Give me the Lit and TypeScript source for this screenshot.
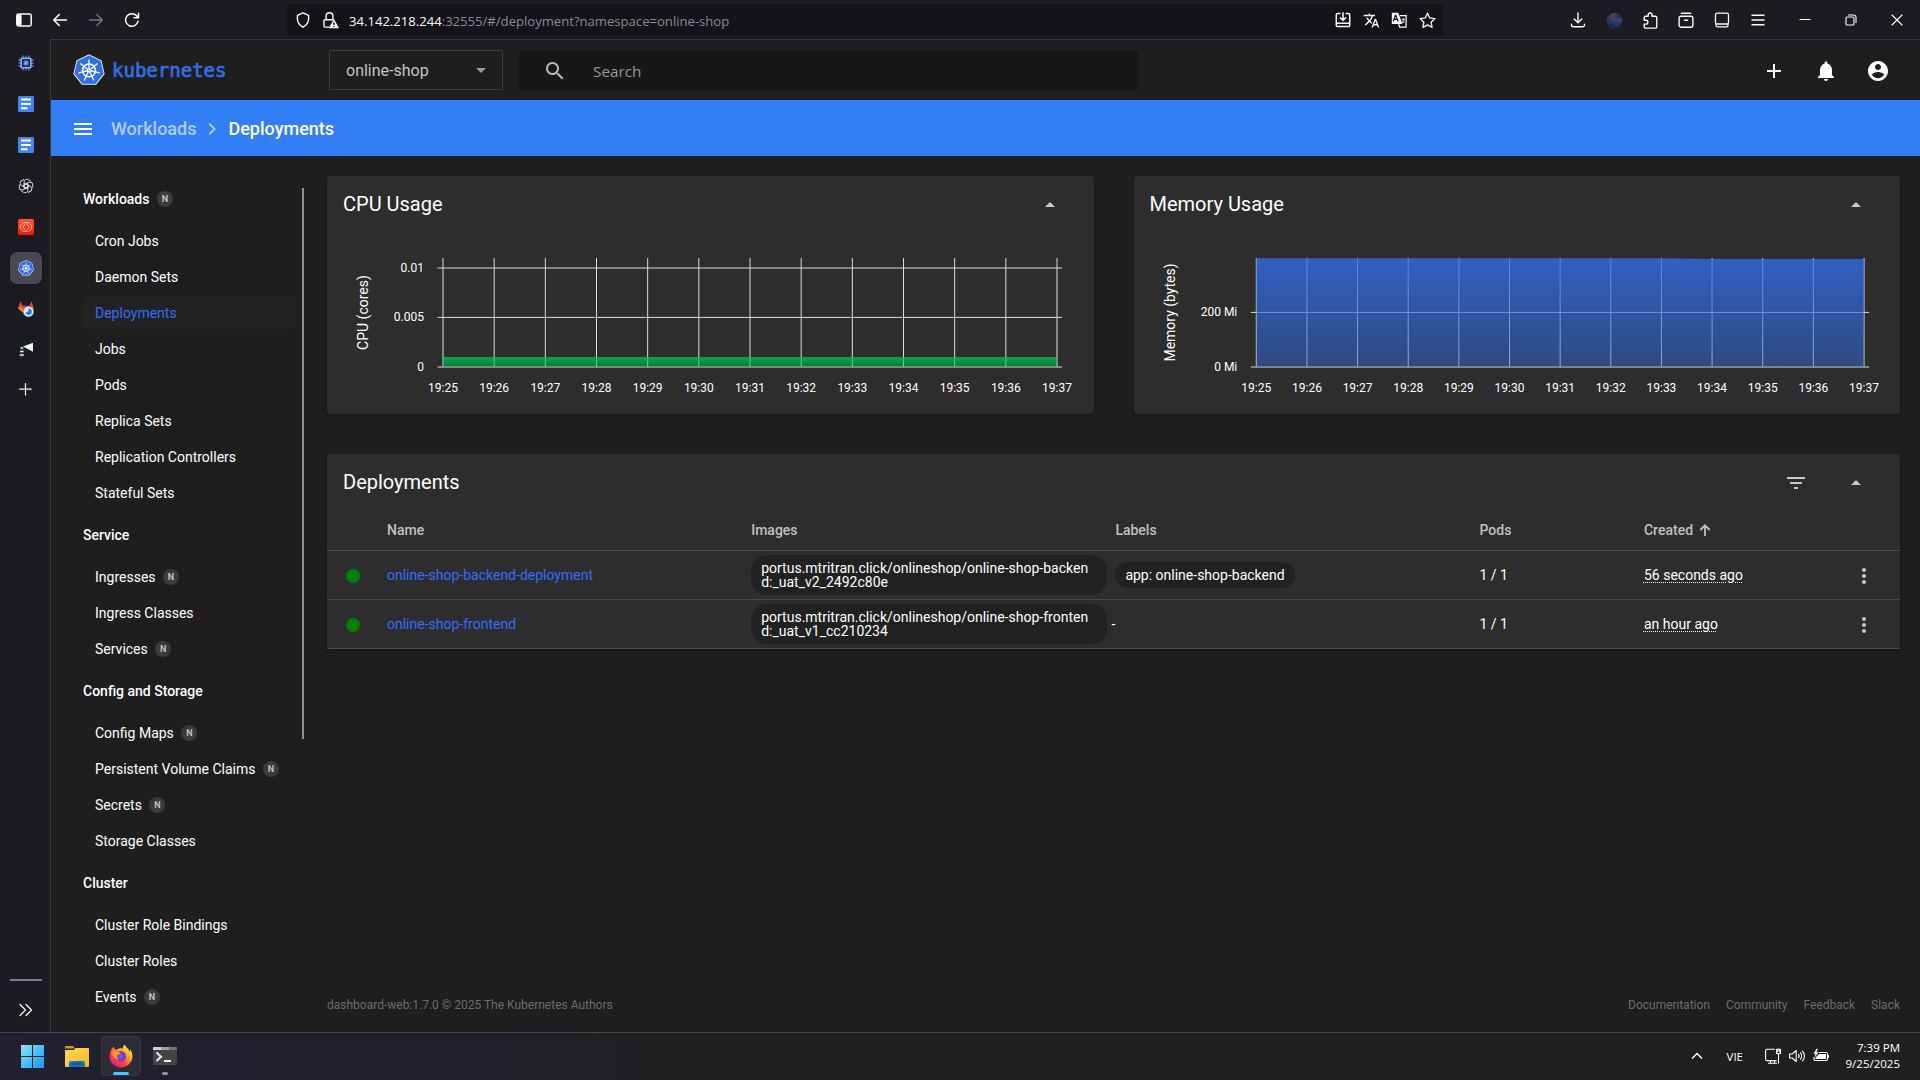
import { LitElement, html, css, svg, TemplateResult } from "lit";
import { customElement, property } from "lit/decorators.js";

const M = {
  search:
    "M15.5 14h-.79l-.28-.27C15.41 12.59 16 11.11 16 9.5 16 5.91 13.09 3 9.5 3S3 5.91 3 9.5 5.91 16 9.5 16c1.61 0 3.09-.59 4.23-1.57l.27.28v.79l5 4.99L20.49 19l-4.99-5zm-6 0C7.01 14 5 11.99 5 9.5S7.01 5 9.5 5 14 7.01 14 9.5 11.99 14 9.5 14z",
  add: "M19 13h-6v6h-2v-6H5v-2h6V5h2v6h6v2z",
  bell: "M12 22c1.1 0 2-.9 2-2h-4c0 1.1.89 2 2 2zm6-6v-5c0-3.07-1.64-5.64-4.5-6.32V4c0-.83-.67-1.5-1.5-1.5s-1.5.67-1.5 1.5v.68C7.63 5.36 6 7.92 6 11v5l-2 2v1h16v-1l-2-2z",
  account:
    "M12 2C6.48 2 2 6.48 2 12s4.48 10 10 10 10-4.48 10-10S17.52 2 12 2zm0 3c1.66 0 3 1.34 3 3s-1.34 3-3 3-3-1.34-3-3 1.34-3 3-3zm0 14.2c-2.5 0-4.71-1.28-6-3.22.03-1.99 4-3.08 6-3.08 1.99 0 5.97 1.09 6 3.08-1.29 1.94-3.5 3.22-6 3.22z",
  menu: "M3 18h18v-2H3v2zm0-5h18v-2H3v2zm0-7v2h18V6H3z",
  chevron: "M10 6L8.59 7.41 13.17 12l-4.58 4.59L10 18l6-6z",
  filter: "M10 18h4v-2h-4v2zM3 6v2h18V6H3zm3 7h12v-2H6v2z",
  more: "M12 8c1.1 0 2-.9 2-2s-.9-2-2-2-2 .9-2 2 .9 2 2 2zm0 2c-1.1 0-2 .9-2 2s.9 2 2 2 2-.9 2-2-.9-2-2-2zm0 6c-1.1 0-2 .9-2 2s.9 2 2 2 2-.9 2-2-.9-2-2-2z",
  up: "M7 14l5-5 5 5z",
  down: "M7 10l5 5 5-5z",
  translate:
    "M12.87 15.07l-2.54-2.51.03-.03c1.74-1.94 2.98-4.17 3.71-6.53H17V4h-7V2H8v2H1v1.99h11.17C11.5 7.92 10.44 9.75 9 11.35 8.07 10.32 7.3 9.19 6.69 8h-2c.73 1.63 1.73 3.17 2.98 4.56l-5.09 5.02L4 19l5-5 3.11 3.11.76-2.04zM18.5 10h-2L12 22h2l1.12-3h4.75L21 22h2l-4.5-12zm-2.62 7l1.62-4.33L19.12 17h-3.24z",
};

const mat = (d: string, size = 24) =>
  html`<svg width=${size} height=${size} viewBox="0 0 24 24" fill="currentColor"><path d=${d} /></svg>`;

const line = (body: TemplateResult | unknown, size = 16, w = 1.3) =>
  html`<svg width=${size} height=${size} viewBox="0 0 16 16" fill="none" stroke="currentColor" stroke-width=${w} stroke-linecap="round" stroke-linejoin="round">${body}</svg>`;

const pt = (cx: number, cy: number, r: number, deg: number) => {
  const a = ((deg - 90) * Math.PI) / 180;
  return [cx + r * Math.cos(a), cy + r * Math.sin(a)] as const;
};

/** Blue heptagon with the seven-spoked helm. */
const helm = (size: number, rim: number) => {
  const seven = [0, 1, 2, 3, 4, 5, 6].map((i) => (i * 360) / 7);
  const hept = seven.map((a) => pt(16, 16.4, 14.8, a).map((v) => v.toFixed(2)).join(",")).join(" ");
  return html`<svg width=${size} height=${size} viewBox="0 0 32 32">
    <polygon points=${hept} fill="#326ce5" stroke="#fff" stroke-width=${rim + 2.2} stroke-linejoin="round" />
    <polygon points=${hept} fill="#326ce5" stroke="#326ce5" stroke-width="0.6" stroke-linejoin="round" />
    <circle cx="16" cy="16.4" r="6.4" fill="none" stroke="#fff" stroke-width="1.5" />
    ${seven.map((a) => {
      const [x1, y1] = pt(16, 16.4, 1.6, a);
      const [x2, y2] = pt(16, 16.4, 10.6, a);
      return svg`<line x1=${x1} y1=${y1} x2=${x2} y2=${y2} stroke="#fff" stroke-width="1.3" stroke-linecap="round" />`;
    })}
    <circle cx="16" cy="16.4" r="2" fill="#fff" />
    <circle cx="16" cy="16.4" r="0.7" fill="#326ce5" />
  </svg>`;
};

const ic = {
  panel: html`<svg width="16" height="16" viewBox="0 0 16 16"><rect x=".8" y="2.1" width="14.4" height="11.8" rx="1.6" fill="none" stroke="#fbfbfe" stroke-width="1.5" /><rect x="1" y="2.4" width="4.6" height="11.2" fill="#fbfbfe" /></svg>`,
  back: line(svg`<path d="M14.5 8H1.8M7.2 2.6 1.7 8l5.5 5.4" />`, 16, 1.5),
  fwd: line(svg`<path d="M1.5 8h12.7M8.8 2.6 14.3 8l-5.5 5.4" />`, 16, 1.4),
  reload: line(svg`<path d="M14 9.3A6.3 6.3 0 1 1 12.4 3.6L14 5.2M14.5 1.2v4.6H9.9" />`, 16, 1.5),
  shield: line(svg`<path d="M8 .9 13.6 3.3v3.5c0 4-2.3 6.6-5.6 8.4-3.3-1.8-5.6-4.4-5.6-8.4V3.3z" />`, 16, 1.4),
  lock: html`<svg width="17" height="17" viewBox="0 0 17 17" fill="none" stroke="#fbfbfe" stroke-width="1.4"><path d="M4.1 8V4.2a3.4 3.4 0 0 1 6.8 0V8M7 15.1H3.2A1.2 1.2 0 0 1 2 13.900V8.900A1.200 1.200 0 0 1 3.200 7.700h8.600" /><path d="M11.900 7.900 16.300 15.800H7.500z" fill="#fbfbfe" stroke-width="1" stroke-linejoin="round" /><path d="M11.900 10.400v2.600M11.900 13.900v1" stroke="#141319" /></svg>`,
  save: line(svg`<path d="M5 1.400H2.600A1.300 1.300 0 0 0 1.300 2.700V13.300a1.300 1.300 0 0 0 1.300 1.300H13.400a1.300 1.300 0 0 0 1.300-1.300V2.700A1.300 1.300 0 0 0 13.400 1.400H11M8 .8V8M5.300 5.800 8 8.400l2.700-2.600M1.500 11.300h13" />`, 16, 1.5),
  gtrans: html`<svg width="16" height="16" viewBox="0 0 16 16"><path d="M.8.7h6.500l4 11.300H.8z" fill="#fbfbfe" /><path d="M2.300 9.300 4.500 3.300h.4L7 9.300M3 7.300h3.300" fill="none" stroke="#141319" stroke-width="1.200" /><path d="M8.800 3.700h6.300v11.500H8.700L7.600 12" fill="none" stroke="#fbfbfe" stroke-width="1.200" /><path d="M10.700 7.300h3.200M12.300 6.500v.8M13.300 7.500c-.5 1.800-1.500 2.800-2.400 3.500M11.300 8.500l2 2.500" fill="none" stroke="#fbfbfe" stroke-width=".9" /></svg>`,
  star: line(svg`<path d="m8 1.100 2.100 4.500 4.900.6-3.600 3.400.9 4.900L8 12.100l-4.300 2.400.9-4.900L1 6.200l4.900-.6z" />`, 17, 1.2),
  download: line(svg`<path d="M8 1v9.600M4.200 7.100 8 10.800l3.800-3.700M1.500 12.200v.8a1.800 1.800 0 0 0 1.800 1.800h9.400a1.800 1.800 0 0 0 1.800-1.800v-.8" />`, 16, 1.4),
  globe: html`<svg width="17" height="17" viewBox="0 0 17 17"><circle cx="8.500" cy="8.500" r="7.800" fill="#243667" /><path d="M2 5.500C4 2 8 .8 10 1.500L8.500 5 12 7l3.500-1 .5 4-3 1-2.500-2-3.500 1-2-3z" fill="#46405a" /><path d="M3 12c3 1 6 4 9 2.500" stroke="#162858" stroke-width="2" fill="none" /></svg>`,
  puzzle: line(svg`<path d="M5.800 4V2.800a1.800 1.800 0 0 1 3.600 0V4h3.300a1.200 1.200 0 0 1 1.200 1.200V14a1.200 1.200 0 0 1-1.200 1.200H3.300A1.200 1.200 0 0 1 2.100 14v-2.600h1.600a1.800 1.800 0 0 0 0-3.600H2.100V5.200A1.200 1.200 0 0 1 3.300 4z" />`, 17, 1.3),
  archive: line(svg`<rect x="1.100" y="4.200" width="13.800" height="11" rx="2" /><path d="M3.300 1.200h9.400M6.500 8.300h3" />`, 16, 1.4),
  device: line(svg`<rect x="1.500" y="1.200" width="13" height="10.800" rx="1.600" /><path d="M2 12.500v.8a1.600 1.600 0 0 0 1.600 1.600h8.800a1.600 1.600 0 0 0 1.600-1.600v-.8" />`, 16, 1.3),
  burger: line(svg`<path d="M2 3.300h12M2 8h12M2 12.700h12" />`, 16, 1.4),
  min: line(svg`<path d="M3 7.500h10" />`, 16, 1.1),
  restore: line(svg`<rect x="3" y="5" width="8" height="8" rx="1.300" /><path d="M5.500 3h5A2.500 2.500 0 0 1 13 5.500v5" />`, 16, 1.1),
  close: line(svg`<path d="M3 3l10 10M13 3 3 13" />`, 16, 1.1),
};

const doc = html`<svg width="16" height="16" viewBox="0 0 16 16"><rect width="16" height="16" rx="1.300" fill="#4285f4" /><path d="M3 3.500h10M3 8h10M3 12.300h6.500" stroke="#fff" stroke-width="1.900" /></svg>`;

const tabs: { icon: TemplateResult; active?: boolean }[] = [
  {
    icon: html`<svg width="16" height="16" viewBox="0 0 16 16" fill="none"><path d="M5 .5v15M8 .5v15M11 .5v15M.5 5h15M.5 8h15M.5 11h15" stroke="#5d86dd" stroke-width="1.300" /><rect x="3.200" y="3.200" width="9.600" height="9.600" rx=".8" fill="#1c2440" stroke="#8fb4fa" stroke-width="1.500" /><rect x="6" y="6" width="4" height="4" fill="#7ea8f8" stroke="#4877dd" /></svg>`,
  },
  { icon: doc },
  { icon: doc },
  {
    icon: html`<svg width="16" height="16" viewBox="-8 -8 16 16" fill="none" stroke="#d4d4d8" stroke-width="1">${[0, 60, 120, 180, 240, 300].map(
      (a) => svg`<path transform="rotate(${a})" d="M-1.800-1.300V-4.700A2.700 2.700 0 0 1 2.300-6.400L4.600-5M-1.800-2.800 1.900-.9V2.700" />`,
    )}</svg>`,
  },
  {
    icon: html`<svg width="16" height="16" viewBox="0 0 16 16"><defs><linearGradient id="rg" x1="0" y1="0" x2="0" y2="1"><stop offset="0" stop-color="#ff5a2c" /><stop offset="1" stop-color="#f81406" /></linearGradient></defs><rect width="16" height="16" rx="2" fill="url(#rg)" /><path d="M8.500 4.200 7 3.400C4.600 3.400 2.200 6 2.200 8s2.400 4.600 4.800 4.600l1.500-.8M7.500 4.200 9 3.400c2.400 0 4.800 2.600 4.800 4.600S11.400 12.600 9 12.600l-1.500-.8" fill="none" stroke="#ffc9bd" stroke-width=".9" stroke-linejoin="round" /><path d="M7 5.200 4.800 8 7 10.800M9 5.200 11.200 8 9 10.800" fill="none" stroke="#ffc9bd" stroke-width=".9" stroke-linejoin="round" /></svg>`,
  },
  { icon: helm(16, 0), active: true },
  {
    icon: html`<svg width="16" height="16" viewBox="0 0 16 16"><path d="M2.600.3 0 7.300l8 6.700 8-6.700L13.400.3l-2 4.400H4.600z" fill="#e8472b" /><path d="M0 7.300 2.300 5.500 9 11v4.500z" fill="#fc7a30" /><circle cx="10.500" cy="10.600" r="5.300" fill="#d9e7f5" stroke="#2f71b8" stroke-width=".5" /><path d="M10.600 7.500a3.200 3.200 0 1 1-3.100 4c2.300.3 3.300-1.500 3.100-4z" fill="#2d78c6" /></svg>`,
  },
  {
    icon: html`<svg width="16" height="16" viewBox="0 0 16 16"><path d="M5 4.500 15 .8v9z" fill="#eef3f6" /><path d="M2 4.500h3.500v11H2z" fill="#17374a" /><path d="M2.500 5.300h2.800v1.500H2.500zM2 8.700h3.700v1.600H2zM1.700 12.300h4.200v1.500H1.700z" fill="#dce5ea" /></svg>`,
  },
  {
    icon: html`<svg width="16" height="16" viewBox="0 0 16 16"><path d="M7.500 .5v11.500M1.700 6.200h11.600" stroke="#fbfbfe" stroke-width="1.200" stroke-linecap="round" /></svg>`,
  },
];

interface Entry { name: string; n?: boolean; active?: boolean }
const nav: { title: string; n?: boolean; items: Entry[] }[] = [
  {
    title: "Workloads",
    n: true,
    items: [
      { name: "Cron Jobs" },
      { name: "Daemon Sets" },
      { name: "Deployments", active: true },
      { name: "Jobs" },
      { name: "Pods" },
      { name: "Replica Sets" },
      { name: "Replication Controllers" },
      { name: "Stateful Sets" },
    ],
  },
  { title: "Service", items: [{ name: "Ingresses", n: true }, { name: "Ingress Classes" }, { name: "Services", n: true }] },
  {
    title: "Config and Storage",
    items: [
      { name: "Config Maps", n: true },
      { name: "Persistent Volume Claims", n: true },
      { name: "Secrets", n: true },
      { name: "Storage Classes" },
    ],
  },
  { title: "Cluster", items: [{ name: "Cluster Role Bindings" }, { name: "Cluster Roles" }, { name: "Events", n: true }] },
];

const rows = [
  {
    name: "online-shop-backend-deployment",
    image: ["portus.mtritran.click/onlineshop/online-shop-backen", "d:_uat_v2_2492c80e"],
    label: "app: online-shop-backend",
    pods: "1 / 1",
    created: "56 seconds ago",
  },
  {
    name: "online-shop-frontend",
    image: ["portus.mtritran.click/onlineshop/online-shop-fronten", "d:_uat_v1_cc210234"],
    label: "",
    pods: "1 / 1",
    created: "an hour ago",
  },
];

@customElement("usage-chart")
class UsageChart extends LitElement {
  @property() heading = "";
  @property() axis = "";
  @property({ type: Number }) x0 = 0;
  @property({ type: Number }) x1 = 0;
  @property({ type: Number }) axisX = 0;
  @property({ type: Number }) fillTop = 0;
  @property({ type: Number }) dip = 0;
  @property() color = "";
  @property({ attribute: false }) ticks: [string, number][] = [];

  static styles = css`
    :host {
      display: flex;
      flex-direction: column;
      flex: 1;
      min-width: 0;
      height: 238px;
      background: #2d2d2d;
      border-radius: 4px;
      box-shadow: 0 1px 3px rgba(0, 0, 0, 0.35);
      color: #fff;
    }
    .head {
      display: flex;
      justify-content: space-between;
      align-items: center;
      height: 56px;
      padding: 0 32px 0 16px;
      font-size: 20px;
    }
    .head svg {
      color: #c8c8c8;
      margin-top: 2px;
    }
    .plot {
      display: block;
      width: 100%;
      height: 182px;
    }
    text {
      fill: #fff;
      font-size: 12px;
    }
    .axis {
      font-size: 14px;
    }
  `;

  render() {
    const bottom = 134.7;
    const top = 26;
    const step = (this.x1 - this.x0) / 12;
    const area = [
      [this.x0, this.fillTop],
      [this.x0 + 8 * step, this.fillTop],
      [this.x0 + 9 * step, this.fillTop + this.dip],
      [this.x1, this.fillTop + this.dip],
      [this.x1, bottom],
      [this.x0, bottom],
    ]
      .map((p) => p.join(","))
      .join(" ");
    return html`
      <div class="head"><span>${this.heading}</span>${mat(M.up)}</div>
      <svg class="plot">
        <defs>
          <linearGradient id="g" x1="0" y1="0" x2="0" y2="1">
            <stop offset="0" stop-color=${this.color} stop-opacity=".8" />
            <stop offset="1" stop-color=${this.color} stop-opacity=".45" />
          </linearGradient>
        </defs>
        <g stroke="#ddd" stroke-width="1">
          ${this.ticks.map(([, y]) => svg`<line x1=${this.x0 - 5.5} x2=${this.x1 + 5.1} y1=${y} y2=${y} />`)}
          ${Array.from({ length: 13 }, (_, i) => {
            const x = this.x0 + i * step;
            return svg`<line x1=${x} x2=${x} y1=${top} y2=${bottom} />`;
          })}
        </g>
        <polygon points=${area} fill="url(#g)" />
        ${this.ticks.map(([t, y]) => svg`<text x=${this.x0 - 19} y=${y + 4} text-anchor="end">${t}</text>`)}
        ${Array.from(
          { length: 13 },
          (_, i) => svg`<text x=${this.x0 + i * step} y="160" text-anchor="middle">19:${25 + i}</text>`,
        )}
        <text class="axis" text-anchor="middle" transform="translate(${this.axisX} 80.500) rotate(-90)">${this.axis}</text>
      </svg>
    `;
  }
}

@customElement("app-root")
class AppRoot extends LitElement {
  static styles = css`
    :host {
      display: block;
      width: 1920px;
      height: 1080px;
      overflow: hidden;
      background: #1e1e1e;
      color: #fff;
      font-family: Roboto, "Liberation Sans", sans-serif;
      font-size: 14px;
    }
    * {
      box-sizing: border-box;
    }
    svg {
      display: block;
      flex: none;
    }
    .screen {
      display: flex;
      flex-direction: column;
      height: 1080px;
    }
    .titlebar {
      display: flex;
      height: 39px;
      background: #1c1b22;
      color: #fbfbfe;
      padding-left: 6px;
      align-items: center;
      flex: none;
    }
    .cell {
      width: 36px;
      height: 39px;
      display: flex;
      align-items: center;
      justify-content: center;
      padding-top: 1px;
    }
    .dim {
      color: #77767d;
    }
    .url {
      display: flex;
      align-items: center;
      width: 1156px;
      height: 32px;
      margin: 1px 117px 0 137px;
      padding: 0 2px 0 8px;
      background: #141319;
      border-radius: 4px;
      font-family: "Open Sans", "Noto Sans", sans-serif;
      font-size: 13.100px;
    }
    .lock {
      margin-left: 11px;
    }
    .addr {
      flex: 1;
      margin-left: 10px;
      color: #8b8a91;
      padding-top: 2px;
    }
    .addr b {
      font-weight: 400;
      color: #fbfbfe;
    }
    .url .cell {
      width: 28px;
      height: 32px;
      padding: 0;
    }
    .win {
      display: flex;
      margin-left: 6px;
    }
    .win .cell {
      width: 46px;
    }
    .body {
      display: flex;
      flex: 1;
      min-height: 0;
      background: #1c1b22;
    }
    .tabs {
      display: flex;
      flex-direction: column;
      align-items: center;
      width: 50px;
      padding: 8px 0 12px 2px;
      flex: none;
    }
    .tab {
      display: flex;
      align-items: center;
      justify-content: center;
      width: 32px;
      height: 32px;
      margin-bottom: 9px;
      border-radius: 7px;
    }
    .tab.active {
      background: #4a4953;
      box-shadow: 0 0 3px rgba(0, 0, 0, 0.5);
    }
    .rule {
      width: 32px;
      height: 2px;
      background: #7e7d86;
      margin-top: auto;
      margin-bottom: 21px;
    }
    .tabs > svg {
      color: #fbfbfe;
      margin-bottom: 2px;
    }
    .page {
      display: flex;
      flex-direction: column;
      flex: 1;
      background: #1e1e1e;
      border-left: 1px solid #38373d;
      border-top: 1px solid #38373d;
    }
    .header {
      display: flex;
      align-items: center;
      height: 60px;
      padding: 0 30px 0 22px;
      flex: none;
    }
    .brand {
      display: flex;
      align-items: center;
      gap: 7px;
      width: 256px;
      color: #326de6;
    }
    .brand text {
      font-family: "DejaVu Sans Mono", monospace;
      font-size: 19px;
      fill: #326de6;
      stroke: #326de6;
      stroke-width: 0.700px;
    }
    .select {
      display: flex;
      align-items: center;
      justify-content: space-between;
      width: 174px;
      height: 40px;
      border: 1px solid #3c3c3c;
      border-radius: 2px;
      padding: 0 9px 0 16px;
      font-size: 16px;
      color: #c4c4c4;
    }
    .select svg {
      color: #9a9a9a;
    }
    .search {
      display: flex;
      align-items: center;
      gap: 26px;
      width: 619px;
      height: 39px;
      margin-left: 16px;
      padding-left: 24px;
      background: #171717;
      border-radius: 3px;
      color: #b9b9b9;
      font-family: "Open Sans", sans-serif;
      font-size: 15.300px;
      margin-top: 1px;
    }
    .search span {
      color: #999;
    }
    .acts {
      display: flex;
      gap: 28px;
      margin-left: auto;
      padding-top: 2px;
    }
    .toolbar {
      display: flex;
      align-items: center;
      height: 56px;
      background: #327ef5;
      padding: 1px 0 0 20px;
      font-size: 18px;
      font-weight: 500;
      flex: none;
    }
    .crumb {
      margin-left: 16px;
    }
    .faded {
      opacity: 0.6;
    }
    .sep {
      padding: 0 4px;
    }
    .content {
      display: flex;
      flex: 1;
      min-height: 0;
    }
    .nav {
      display: flex;
      flex-direction: column;
      width: 251px;
      padding: 19px 7px 0 32px;
      flex: none;
    }
    .group,
    .item {
      display: flex;
      align-items: center;
      gap: 7.500px;
      flex: none;
    }
    .group {
      height: 48px;
      font-weight: 500;
    }
    .item {
      height: 32px;
      margin: 2px 0;
      padding-left: 12px;
      border-radius: 2px;
    }
    .item.active {
      background: #222;
      color: #326ffb;
    }
    .n {
      width: 16px;
      height: 16px;
      border-radius: 50%;
      background: #3b3b3b;
      color: #c0c0c0;
      font-size: 9px;
      font-weight: 700;
      line-height: 17px;
      text-align: center;
    }
    .scroll {
      width: 2px;
      height: 551px;
      margin-top: 32px;
      background: #8f9094;
      flex: none;
    }
    .main {
      display: flex;
      flex-direction: column;
      flex: 1;
      padding: 20px 20px 0 23px;
    }
    .charts {
      display: flex;
      gap: 40px;
      margin-bottom: 40px;
    }
    .card {
      background: #2d2d2d;
      border-radius: 4px 4px 0 0;
      box-shadow: 0 1px 3px rgba(0, 0, 0, 0.35);
    }
    .cardhead {
      display: flex;
      align-items: center;
      height: 56px;
      padding: 0 32px 0 16px;
      font-size: 20px;
    }
    .cardhead svg {
      color: #c8c8c8;
      margin: 2px 0 0 36px;
    }
    .cardhead svg:nth-of-type(1) {
      margin-left: auto;
    }
    .row {
      display: grid;
      grid-template-columns: 60px 364.200px 364.200px 364.100px 164.500px 1fr 48px;
      align-items: center;
      height: 49px;
      border-bottom: 1px solid #4a4a4a;
    }
    .row.th {
      height: 41px;
      padding-bottom: 1px;
      font-weight: 500;
      color: #c0c0c0;
    }
    .created {
      display: flex;
      align-items: center;
      gap: 6px;
    }
    .dot {
      width: 14px;
      height: 14px;
      border-radius: 50%;
      background: #008000;
      margin: 2px 0 0 19px;
    }
    .link {
      color: #326ffb;
    }
    .chip {
      background: #212121;
      border-radius: 16px;
      width: 356px;
      height: 40px;
      padding: 6px 0 0 10px;
      line-height: 14px;
      white-space: nowrap;
    }
    .label {
      display: inline-block;
      background: #212121;
      border-radius: 13px;
      height: 26px;
      line-height: 26px;
      padding: 0 10px;
    }
    .none {
      margin-left: -4px;
    }
    .time {
      text-decoration: underline dotted 1px;
      text-underline-offset: 2px;
    }
    .more {
      color: #c8c8c8;
      margin-top: 2px;
    }
    .footer {
      display: flex;
      gap: 16px;
      margin-top: auto;
      padding-bottom: 19px;
      font-size: 12px;
      line-height: 16px;
      color: #6c6c6c;
    }
    .footer span:first-child {
      margin-right: auto;
    }
    .taskbar {
      display: flex;
      align-items: flex-start;
      height: 48px;
      border-top: 1px solid #434348;
      background: linear-gradient(90deg, #20202e 0%, #20202a 22%, #202022 36%, #202020 100%);
      padding: 3px 20px 0 13px;
      flex: none;
      font-family: "Open Sans", sans-serif;
      font-size: 12px;
    }
    .app {
      display: grid;
      place-items: center;
      align-content: start;
      width: 40px;
      height: 40px;
      margin-right: 4px;
      padding-top: 7px;
      border: 1px solid transparent;
      border-radius: 4px;
      row-gap: 4px;
    }
    .app.on {
      background: #2d2d39;
      border-color: #363641;
    }
    .pip {
      width: 6px;
      height: 3px;
      border-radius: 2px;
      background: #94949a;
    }
    .on .pip {
      width: 16px;
      background: #4cc2ff;
    }
    .tray {
      display: flex;
      align-items: center;
      height: 40px;
      margin-left: auto;
    }
    .tray > svg {
      margin-bottom: 1px;
    }
    .lang {
      margin: 1px 22px 0 24px;
      font-size: 11.500px;
    }
    .sys {
      display: flex;
      gap: 8px;
      margin-right: 16px;
    }
    .clock {
      text-align: right;
      line-height: 16px;
      font-size: 11.500px;
      width: 55px;
      white-space: nowrap;
      display: flex;
      flex-direction: column;
      align-items: flex-end;
    }
  `;

  private badge(show?: boolean) {
    return show ? html`<span class="n">N</span>` : "";
  }

  render() {
    return html`
      <div class="screen">
        <div class="titlebar">
          <div class="cell">${ic.panel}</div>
          <div class="cell">${ic.back}</div>
          <div class="cell dim">${ic.fwd}</div>
          <div class="cell">${ic.reload}</div>
          <div class="url">
            ${ic.shield}
            <span class="lock">${ic.lock}</span>
            <span class="addr"><b>34.142.218.244</b>:32555/#/deployment?namespace=online-shop</span>
            <div class="cell">${ic.save}</div>
            <div class="cell">${mat(M.translate, 17)}</div>
            <div class="cell">${ic.gtrans}</div>
            <div class="cell">${ic.star}</div>
          </div>
          ${[ic.download, ic.globe, ic.puzzle, ic.archive, ic.device, ic.burger].map((i) => html`<div class="cell">${i}</div>`)}
          <div class="win">${[ic.min, ic.restore, ic.close].map((i) => html`<div class="cell">${i}</div>`)}</div>
        </div>

        <div class="body">
          <div class="tabs">
            ${tabs.map((t) => html`<div class="tab ${t.active ? "active" : ""}">${t.icon}</div>`)}
            <div class="rule"></div>
            ${line(svg`<path d="M2 2.500 7.500 8 2 13.500M8 2.500 13.500 8 8 13.500" />`, 16, 1.2)}
          </div>

          <div class="page">
            <div class="header">
              <div class="brand">
                ${helm(32, 0)}
                <svg width="116" height="32"><text x="0" y="23" textLength="114.500" lengthAdjust="spacingAndGlyphs">kubernetes</text></svg>
              </div>
              <div class="select"><span>online-shop</span>${mat(M.down)}</div>
              <div class="search">${mat(M.search)}<span>Search</span></div>
              <div class="acts">${mat(M.add)}${mat(M.bell)}${mat(M.account)}</div>
            </div>
            <div class="toolbar">
              ${mat(M.menu)}
              <span class="crumb faded">Workloads</span>
              <span class="faded sep">${mat(M.chevron, 24)}</span>
              <span>Deployments</span>
            </div>
            <div class="content">
              <div class="nav">
                ${nav.map(
                  (g) => html`<div class="group">${g.title}${this.badge(g.n)}</div>
                    ${g.items.map((i) => html`<div class="item ${i.active ? "active" : ""}">${i.name}${this.badge(i.n)}</div>`)}`,
                )}
              </div>
              <div class="scroll"></div>
              <div class="main">
                <div class="charts">
                  <usage-chart
                    heading="CPU Usage"
                    axis="CPU (cores)"
                    .x0=${116}
                    .x1=${730}
                    .axisX=${40.8}
                    .fillTop=${125}
                    color="#00c752"
                    .ticks=${[["0.01", 36], ["0.005", 85.4], ["0", 135]]}
                  ></usage-chart>
                  <usage-chart
                    heading="Memory Usage"
                    axis="Memory (bytes)"
                    .x0=${122.3}
                    .x1=${730}
                    .axisX=${40.8}
                    .fillTop=${26.3}
                    .dip=${0.7}
                    color="#326de6"
                    .ticks=${[["200 Mi", 80.4], ["0 Mi", 135]]}
                  ></usage-chart>
                </div>
                <div class="card">
                  <div class="cardhead"><span>Deployments</span>${mat(M.filter)}${mat(M.up)}</div>
                  <div class="row th">
                    <span></span><span>Name</span><span>Images</span><span>Labels</span><span>Pods</span>
                    <span class="created">Created
                      <svg width="12" height="12" viewBox="0 0 12 12" fill="none" stroke="currentColor" stroke-width="1.800"><path d="M6 12V1.500M1.300 6 6 1.300 10.700 6" /></svg>
                    </span>
                    <span></span>
                  </div>
                  ${rows.map(
                    (r) => html`<div class="row">
                      <span class="dot"></span>
                      <span class="link">${r.name}</span>
                      <div class="chip">${r.image[0]}<br />${r.image[1]}</div>
                      <div>${r.label ? html`<span class="label">${r.label}</span>` : html`<span class="none">-</span>`}</div>
                      <span>${r.pods}</span>
                      <span><span class="time">${r.created}</span></span>
                      <span class="more">${mat(M.more)}</span>
                    </div>`,
                  )}
                </div>
                <div class="footer">
                  <span>dashboard-web:1.7.0 © 2025 The Kubernetes Authors</span>
                  <span>Documentation</span><span>Community</span><span>Feedback</span><span>Slack</span>
                </div>
              </div>
            </div>
          </div>
        </div>

        <div class="taskbar">
          <div class="app">
            <svg width="24" height="24" viewBox="0 0 24 24"><defs><linearGradient id="w" x1="0" y1="0" x2="1" y2="1"><stop offset="0" stop-color="#8fe3fb" /><stop offset="1" stop-color="#109af0" /></linearGradient></defs><path d="M0 1h11v11H0zM12 1h11v11H12zM0 13h11v11H0zM12 13h11v11H12z" fill="url(#w)" /></svg>
          </div>
          <div class="app">
            <svg width="24" height="24" viewBox="0 0 24 24"><defs><linearGradient id="f" x1="0" y1="0" x2="1" y2="1"><stop offset="0" stop-color="#ffdc6b" /><stop offset="1" stop-color="#f6b50c" /></linearGradient></defs><path d="M0 3a1 1 0 0 1 1-1h7l2 2.500H0z" fill="#d99a0b" /><path d="M0 6h9l1.500-2H23a1 1 0 0 1 1 1v17a1 1 0 0 1-1 1H1a1 1 0 0 1-1-1z" fill="url(#f)" /><path d="M4 23v-4a2 2 0 0 1 2-2h12a2 2 0 0 1 2 2v4z" fill="#1473c4" /><path d="M7 20h10" stroke="#0b4f92" stroke-width="1.300" /></svg>
          </div>
          <div class="app on">
            <svg width="24" height="24" viewBox="0 0 24 24">
              <defs>
                <linearGradient id="ff" x1=".85" y1=".05" x2=".2" y2=".95"><stop offset="0" stop-color="#fff14a" /><stop offset=".35" stop-color="#ffab22" /><stop offset=".65" stop-color="#ff4a3c" /><stop offset="1" stop-color="#e31587" /></linearGradient>
                <radialGradient id="fp"><stop offset="0" stop-color="#8c54f5" /><stop offset="1" stop-color="#5a39c8" /></radialGradient>
              </defs>
              <path d="M15.500.5c-1.300 1.400-1.700 3-1.500 4.300C11 3.800 8.500 4.700 7.300 6 6 5.500 5 4 4.700 2.800 2.200 5 .6 8.500.6 12.300.6 18.600 5.700 23.500 12 23.500S23.500 18.600 23.500 12.300c0-2.600-1-5.200-2.500-6.800.2 1 .2 1.800 0 2.500C20 4.500 16.500 3 15.500.5z" fill="url(#ff)" />
              <circle cx="11.800" cy="12.300" r="5.200" fill="url(#fp)" />
              <path d="M3 8.500c2-1.600 4-1.300 5-.4 1.400-.5 2.800-.1 3.600.8-.6 1.700-2.400 1.500-3.300 2.200-.6 1.600-.3 3.500 1.700 4.500C6 15.500 3 12.500 3 8.500z" fill="#ff9a2b" />
            </svg>
            <span class="pip"></span>
          </div>
          <div class="app">
            <svg width="24" height="24" viewBox="0 0 24 24"><rect y="3" width="24" height="18" rx="1" fill="#434343" /><path d="M0 6V4a1 1 0 0 1 1-1h7v3z" fill="#d2d2d2" /><path d="M8 3h8v3H8z" fill="#a0a0a0" /><path d="M16 3h7a1 1 0 0 1 1 1v2h-8z" fill="#747474" /><path d="M3.500 8.500 8 12.700 3.500 17" fill="none" stroke="#e2e2e2" stroke-width="2.200" /><path d="M11 17h7" stroke="#fff" stroke-width="1.800" /></svg>
            <span class="pip"></span>
          </div>
          <div class="tray">
            <svg width="12" height="12" viewBox="0 0 12 12" fill="none" stroke="#fff" stroke-width="1.500"><path d="M1 8.500 6 3.500l5 5" /></svg>
            <span class="lang">VIE</span>
            <div class="sys">
              <svg width="16" height="16" viewBox="0 0 16 16" fill="none" stroke="#fff" stroke-width="1.100"><path d="M10 1.300H2A1.500 1.500 0 0 0 .6 2.800v8.400A1.500 1.500 0 0 0 2 12.600h9.500M5.500 12.600v2.600M3 15.300h9M9.500 12.600v2.600" /><path d="M11.600 1.200h3.800v4.300h-3.800zM12.600 1v3M14.300 1v3M13.500 5.500V15.500" /></svg>
              <svg width="16" height="16" viewBox="0 0 16 16" fill="none" stroke="#fff" stroke-width="1.100" stroke-linejoin="round"><path d="M.6 6h2.600l4-3.500v11L3.200 10H.6zM9.300 6a3 3 0 0 1 0 4M11.200 4.300a5.300 5.300 0 0 1 0 7.400M13.200 2.600a7.700 7.700 0 0 1 0 10.800" /></svg>
              <svg width="16" height="16" viewBox="0 0 16 16"><path d="M6 4.500h7a1.500 1.500 0 0 1 1.500 1.500v5a1.500 1.500 0 0 1-1.500 1.500H2.500A1.500 1.500 0 0 1 1 11V9" fill="none" stroke="#fff" stroke-width="1.100" /><path d="M6.200 6H13v5H2.600V9.500z" fill="#fff" /><path d="M14.700 7h1.300v3h-1.300z" fill="#fff" /><path d="M3.500.8.400 5.800h2l-.7 3.500 4-5H3.400L5 .8z" fill="#fff" /></svg>
            </div>
            <div class="clock"><span>7:39 PM</span><span>9/25/2025</span></div>
          </div>
        </div>
      </div>
    `;
  }
}
